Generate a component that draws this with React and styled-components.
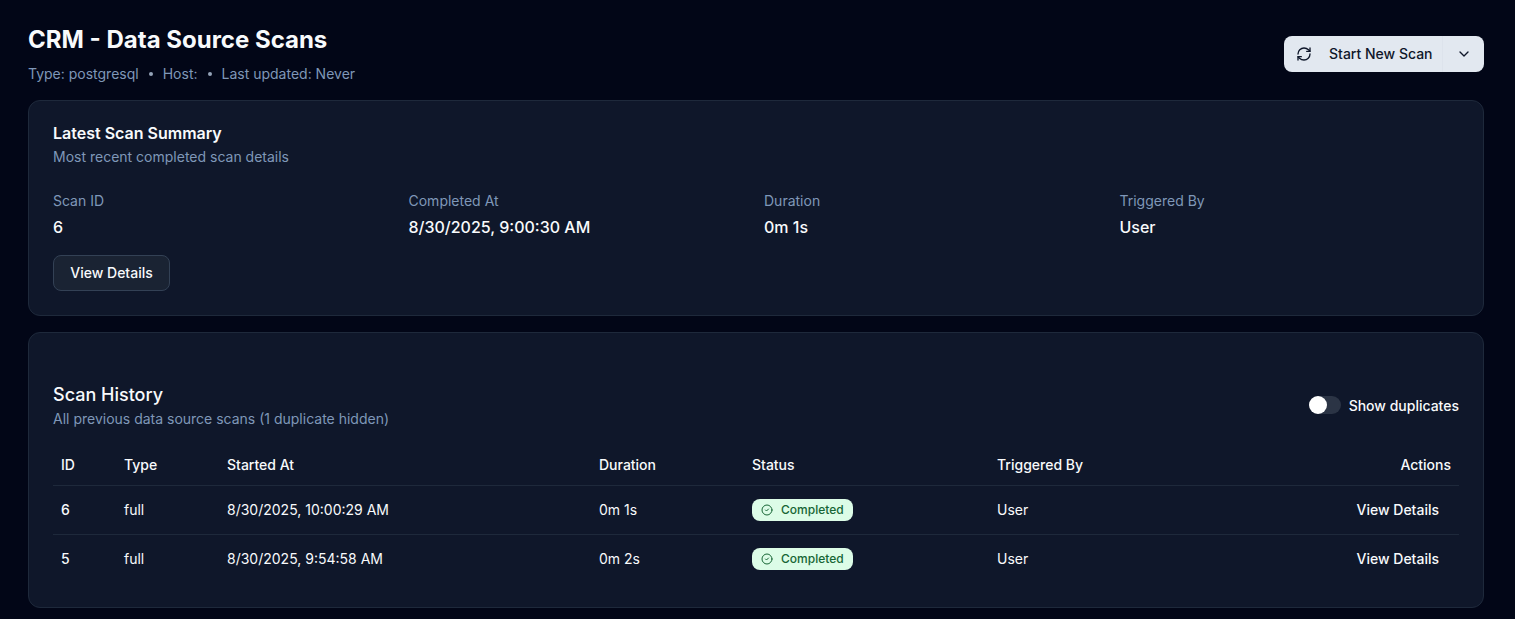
import React from "react";
import styled, { createGlobalStyle } from "styled-components";
import { RefreshCw, ChevronDown, CircleCheck } from "lucide-react";

const GlobalStyle = createGlobalStyle`
  html, body {
    margin: 0;
    background: #020617;
  }

  body {
    font-family: Inter, "Liberation Sans", sans-serif;
    color: #f8fafc;
  }
`;

const Page = styled.div`
  height: 619px;
  overflow: hidden;
  box-sizing: border-box;
  padding: 24px 31px 0 28px;
  background: #020617;
`;

const Header = styled.header`
  display: flex;
  justify-content: space-between;
  align-items: center;
  height: 60px;
  margin-bottom: 16px;
`;

const Title = styled.h1`
  margin: 0;
  font-size: 24px;
  line-height: 32px;
  font-weight: 700;
  color: #f8fafc;
`;

const Meta = styled.div`
  display: flex;
  align-items: center;
  gap: 9px;
  margin-top: 8px;
  font-size: 14px;
  line-height: 20px;
  color: #7f97b8;
`;

const Dot = styled.span`
  width: 4px;
  height: 4px;
  margin: 0 1px;
  border-radius: 50%;
  background: #94a3b8;
`;

const SplitButton = styled.div`
  display: flex;
  width: 200px;
  height: 36px;
  border-radius: 8px;
  background: #e2e8f0;
  color: #0f172a;
`;

const ScanButton = styled.button`
  flex: 1;
  display: flex;
  align-items: center;
  gap: 17px;
  padding: 0 0 1px 12px;
  border: 0;
  border-right: 1px solid #dde3ec;
  background: none;
  color: inherit;
  font: 500 14px Inter, sans-serif;
  white-space: nowrap;
`;

const MenuButton = styled.button`
  display: flex;
  align-items: center;
  justify-content: center;
  width: 41px;
  padding: 0;
  border: 0;
  background: none;
  color: inherit;
`;

const Card = styled.section`
  box-sizing: border-box;
  height: ${(p) => p.$height}px;
  margin-bottom: 16px;
  padding: ${(p) => p.$top}px 24px 24px;
  border: 1px solid #1e293b;
  border-radius: 12px;
  background: #0f172a;
`;

const CardTitle = styled.h2`
  margin: 0;
  font-size: 16px;
  line-height: 24px;
  font-weight: 600;
`;

const Muted = styled.p`
  margin: 0;
  font-size: 14px;
  line-height: 24px;
  color: #7f97b8;
`;

const SummaryGrid = styled.div`
  display: grid;
  grid-template-columns: repeat(4, 1fr);
  gap: 16px;
  margin-top: 20px;
`;

const Label = styled.div`
  font-size: 14px;
  line-height: 24px;
  color: #7f97b8;
`;

const Value = styled.div`
  margin-top: 2px;
  font-size: 16px;
  line-height: 24px;
  font-weight: 500;
`;

const OutlineButton = styled.button`
  display: block;
  width: 117px;
  height: 36px;
  margin-top: 16px;
  padding: 0 0 1px;
  border: 1px solid #334155;
  border-radius: 8px;
  background: #1a2333;
  color: #f8fafc;
  font: 500 14px Inter, sans-serif;
`;

const HistoryHeader = styled.div`
  display: flex;
  justify-content: space-between;
  align-items: center;
`;

const HistoryTitle = styled(CardTitle)`
  font-size: 18px;
  line-height: 28px;
  font-weight: 500;
`;

const HistoryNote = styled(Muted)`
  line-height: 20px;
`;

const ToggleRow = styled.div`
  display: flex;
  align-items: center;
  gap: 8px;
  font-size: 14px;
  font-weight: 500;
`;

const Track = styled.span`
  display: flex;
  width: 32px;
  height: 18px;
  border-radius: 9px;
  background: #2b3445;
`;

const Thumb = styled.span`
  width: 18px;
  height: 18px;
  border-radius: 50%;
  background: #fff;
`;

const Table = styled.table`
  width: 100%;
  margin-top: 15px;
  border-collapse: collapse;
  table-layout: fixed;
  font-size: 14px;
`;

const Th = styled.th`
  box-sizing: border-box;
  width: ${(p) => (p.$width ? `${p.$width}px` : "auto")};
  height: 41px;
  padding: 0 8px;
  border-bottom: 1px solid #1e293b;
  font-weight: 500;
  text-align: ${(p) => (p.$right ? "right" : "left")};
`;

const Td = styled.td`
  height: 48px;
  padding: 0 8px;
  border-bottom: 1px solid ${(p) => (p.$last ? "transparent" : "#1e293b")};
  font-weight: ${(p) => (p.$strong ? 500 : 400)};
  text-align: ${(p) => (p.$right ? "right" : "left")};
`;

const GhostButton = styled.button`
  padding: 0 12px;
  border: 0;
  background: none;
  color: #f8fafc;
  font: 500 14px Inter, sans-serif;
`;

const Badge = styled.span`
  display: inline-flex;
  align-items: center;
  gap: 8px;
  box-sizing: border-box;
  width: 101px;
  height: 22px;
  padding: 0 9px;
  border-radius: 8px;
  background: #dcfce7;
  color: #166534;
  font-size: 12px;
  font-weight: 500;
  vertical-align: middle;
`;

const columns = [
  { name: "ID", width: 63 },
  { name: "Type", width: 103 },
  { name: "Started At", width: 372 },
  { name: "Duration", width: 153 },
  { name: "Status", width: 245 },
  { name: "Triggered By", width: 220 },
  { name: "Actions", right: true },
];

const scans = [
  { id: 6, type: "full", started: "8/30/2025, 10:00:29 AM", duration: "0m 1s" },
  { id: 5, type: "full", started: "8/30/2025, 9:54:58 AM", duration: "0m 2s" },
];

const summary = [
  ["Scan ID", "6"],
  ["Completed At", "8/30/2025, 9:00:30 AM"],
  ["Duration", "0m 1s"],
  ["Triggered By", "User"],
];

const App = () => {
  return (
    <Page>
      <GlobalStyle />
      <Header>
        <div>
          <Title>CRM - Data Source Scans</Title>
          <Meta>
            <span>Type: postgresql</span>
            <Dot />
            <span>Host:</span>
            <Dot />
            <span>Last updated: Never</span>
          </Meta>
        </div>
        <SplitButton>
          <ScanButton>
            <RefreshCw size={16} />
            Start New Scan
          </ScanButton>
          <MenuButton>
            <ChevronDown size={16} />
          </MenuButton>
        </SplitButton>
      </Header>

      <Card $height={216} $top={20}>
        <CardTitle>Latest Scan Summary</CardTitle>
        <Muted>Most recent completed scan details</Muted>
        <SummaryGrid>
          {summary.map(([label, value]) => (
            <div key={label}>
              <Label>{label}</Label>
              <Value>{value}</Value>
            </div>
          ))}
        </SummaryGrid>
        <OutlineButton>View Details</OutlineButton>
      </Card>

      <Card $height={276} $top={48}>
        <HistoryHeader>
          <div>
            <HistoryTitle>Scan History</HistoryTitle>
            <HistoryNote>All previous data source scans (1 duplicate hidden)</HistoryNote>
          </div>
          <ToggleRow>
            <Track>
              <Thumb />
            </Track>
            Show duplicates
          </ToggleRow>
        </HistoryHeader>
        <Table>
          <thead>
            <tr>
              {columns.map((col) => (
                <Th key={col.name} $width={col.width} $right={col.right}>
                  {col.name}
                </Th>
              ))}
            </tr>
          </thead>
          <tbody>
            {scans.map((scan, index) => {
              const last = index === scans.length - 1;
              return (
                <tr key={scan.id}>
                  <Td $last={last} $strong>{scan.id}</Td>
                  <Td $last={last}>{scan.type}</Td>
                  <Td $last={last}>{scan.started}</Td>
                  <Td $last={last}>{scan.duration}</Td>
                  <Td $last={last}>
                    <Badge>
                      <CircleCheck size={12} />
                      Completed
                    </Badge>
                  </Td>
                  <Td $last={last}>User</Td>
                  <Td $last={last} $right>
                    <GhostButton>View Details</GhostButton>
                  </Td>
                </tr>
              );
            })}
          </tbody>
        </Table>
      </Card>
    </Page>
  );
};

export default App;
